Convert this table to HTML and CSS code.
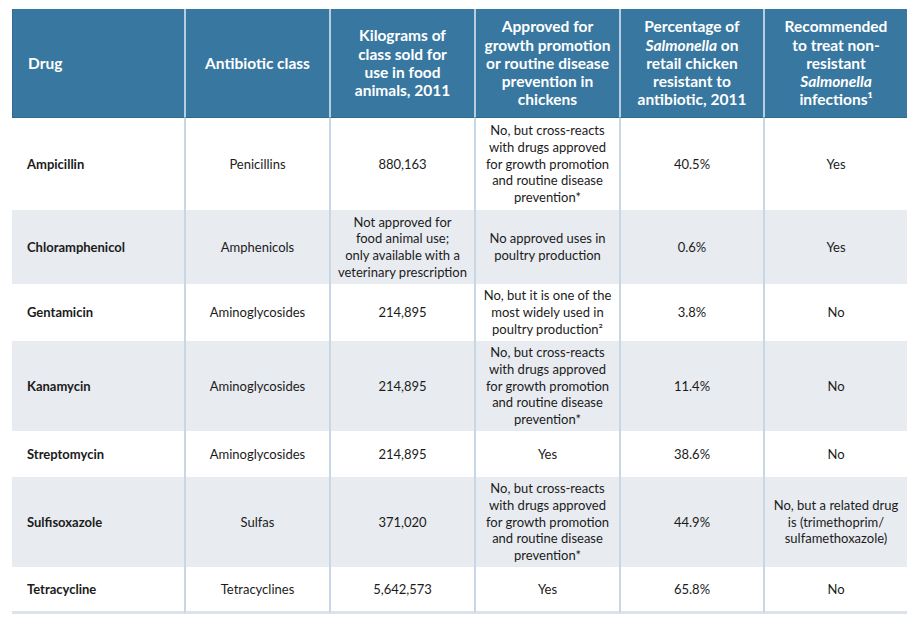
FILE: index.html
```html
<!DOCTYPE html>
<html>
<head>
<meta charset="utf-8">
<link rel="stylesheet" href="styles.css">
</head>
<body>
<table class="drugs">
  <colgroup>
    <col class="c1"><col class="c2"><col class="c3"><col class="c4"><col class="c5"><col class="c6">
  </colgroup>
  <thead>
    <tr class="head">
      <th class="first">Drug</th>
      <th>Antibiotic class</th>
      <th>Kilograms of<br>class sold for<br>use in food<br>animals, 2011</th>
      <th>Approved for<br>growth promotion<br>or routine disease<br>prevention in<br>chickens</th>
      <th>Percentage of<br><i>Salmonella</i> on<br>retail chicken<br>resistant to<br>antibiotic, 2011</th>
      <th>Recommended<br>to treat non-<br>resistant<br><i>Salmonella</i><br>infections¹</th>
    </tr>
  </thead>
  <tbody>
    <tr class="h92">
      <td class="first">Ampicillin</td>
      <td>Penicillins</td>
      <td>880,163</td>
      <td>No, but cross-reacts<br>with drugs approved<br>for growth promotion<br>and routine disease<br>prevention*</td>
      <td>40.5%</td>
      <td>Yes</td>
    </tr>
    <tr class="alt h74">
      <td class="first">Chloramphenicol</td>
      <td>Amphenicols</td>
      <td>Not approved for<br>food animal use;<br>only available with a<br>veterinary prescription</td>
      <td>No approved uses in<br>poultry production</td>
      <td>0.6%</td>
      <td>Yes</td>
    </tr>
    <tr class="h57">
      <td class="first">Gentamicin</td>
      <td>Aminoglycosides</td>
      <td>214,895</td>
      <td>No, but it is one of the<br>most widely used in<br>poultry production²</td>
      <td>3.8%</td>
      <td>No</td>
    </tr>
    <tr class="alt h90">
      <td class="first">Kanamycin</td>
      <td>Aminoglycosides</td>
      <td>214,895</td>
      <td>No, but cross-reacts<br>with drugs approved<br>for growth promotion<br>and routine disease<br>prevention*</td>
      <td>11.4%</td>
      <td>No</td>
    </tr>
    <tr class="h46">
      <td class="first">Streptomycin</td>
      <td>Aminoglycosides</td>
      <td>214,895</td>
      <td>Yes</td>
      <td>38.6%</td>
      <td>No</td>
    </tr>
    <tr class="alt h90">
      <td class="first">Sulfisoxazole</td>
      <td>Sulfas</td>
      <td>371,020</td>
      <td>No, but cross-reacts<br>with drugs approved<br>for growth promotion<br>and routine disease<br>prevention*</td>
      <td>44.9%</td>
      <td>No, but a related drug<br>is (trimethoprim/<br>sulfamethoxazole)</td>
    </tr>
    <tr class="h45 last">
      <td class="first">Tetracycline</td>
      <td>Tetracyclines</td>
      <td>5,642,573</td>
      <td>Yes</td>
      <td>65.8%</td>
      <td>No</td>
    </tr>
  </tbody>
</table>
</body>
</html>
```

FILE: styles.css
```css
html, body {
  margin: 0;
  padding: 0;
  background: #ffffff;
}
body {
  padding: 9px 0 0 12px;
  font-family: Lato, "Liberation Sans", sans-serif;
  color: #1b1b1b;
}
.drugs {
  border-collapse: separate;
  border-spacing: 0;
  table-layout: fixed;
  width: 895px;
}
.c1 { width: 172px; }
.c2 { width: 145px; }
.c3 { width: 145px; }
.c4 { width: 145px; }
.c5 { width: 144px; }
.c6 { width: 144px; }

.head th {
  background: #3878a0;
  color: #ffffff;
  font-weight: 700;
  font-size: 15.5px;
  line-height: 18.3px;
  height: 109px;
  padding: 0 2px;
  box-sizing: border-box;
  text-align: center;
  vertical-align: middle;
  white-space: nowrap;
  border-left: 2px solid #b7cde0;
  border-bottom: 1px solid #2f6a8f;
}
.head th.first {
  text-align: left;
  padding-left: 15px;
  border-left: 1px solid #2f6a8f;
}
.head th i { font-style: italic; }

td {
  font-size: 13px;
  line-height: 16.7px;
  text-align: center;
  vertical-align: middle;
  padding: 0 2px;
  box-sizing: border-box;
  white-space: nowrap;
  border-left: 2px solid #c9d6e4;
}
td.first {
  text-align: left;
  padding-left: 15px;
  font-weight: 700;
  border-left: none;
}
tr.alt td { background: #e8ebf0; }
tr.last td { border-bottom: 3px solid #dce3ec; }

.h92 td { height: 92px; }
.h74 td { height: 74px; }
.h57 td { height: 57px; }
.h90 td { height: 90px; }
.h46 td { height: 46px; }
.h45 td { height: 47px; }
```
